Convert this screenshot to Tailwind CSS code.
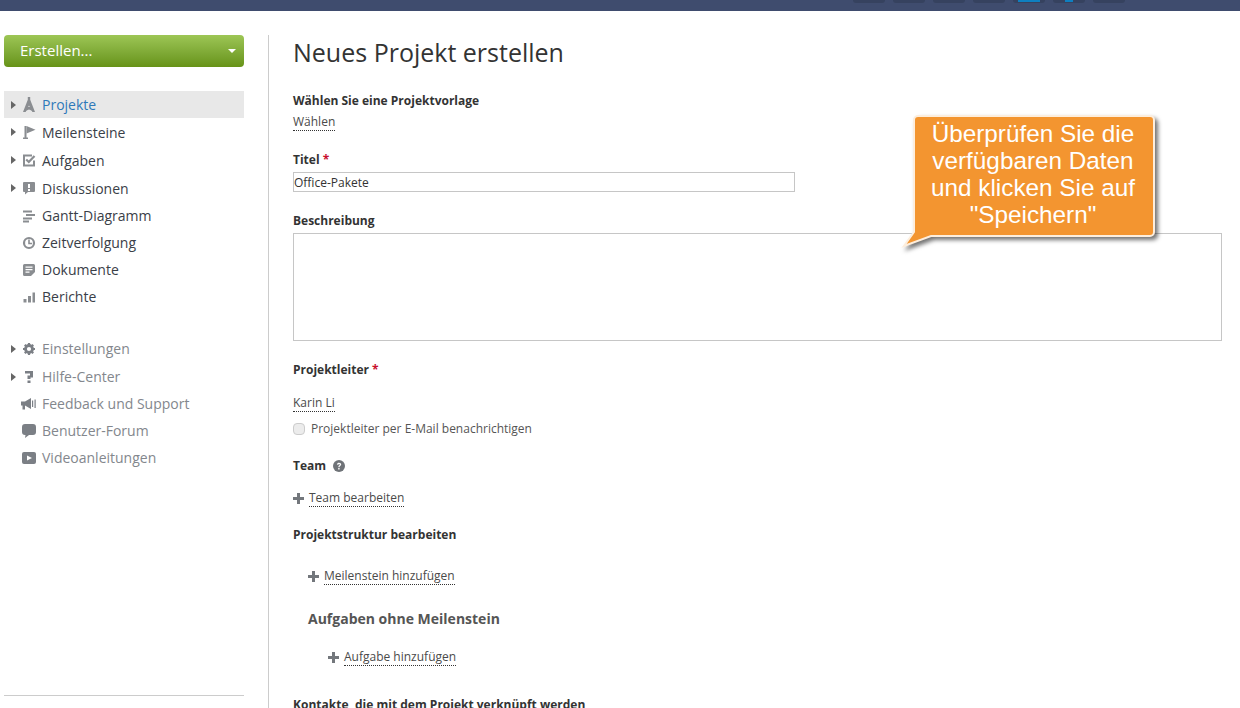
<!DOCTYPE html>
<html lang="de">
<head>
  <meta charset="UTF-8" />
  <title>Neues Projekt erstellen</title>
  <script src="https://cdn.jsdelivr.net/npm/@tailwindcss/browser@4"></script>
</head>
<body class="relative h-[708px] overflow-hidden bg-white font-['Open_Sans',sans-serif] text-[12px] text-[#333]">

<!-- top bar -->
<header class="h-[11px] bg-[#3f4c6e] flex justify-end items-start pr-[115px] gap-2">
  <div class="w-8 h-[3px] bg-[#36425f] rounded-b-sm"></div>
  <div class="w-8 h-[3px] bg-[#36425f] rounded-b-sm"></div>
  <div class="w-8 h-[3px] bg-[#36425f] rounded-b-sm"></div>
  <div class="w-8 h-[3px] bg-[#36425f] rounded-b-sm"></div>
  <div class="w-8 h-[3px] bg-[#36425f] rounded-b-sm flex justify-center"><div class="w-[22px] h-[2px] bg-[#0e7fc0]"></div></div>
  <div class="w-8 h-[3px] bg-[#36425f] rounded-b-sm flex justify-center"><div class="w-2 h-[2px] bg-[#0e7fc0]"></div></div>
  <div class="w-8 h-[3px] bg-[#36425f] rounded-b-sm"></div>
</header>

<div class="flex h-[697px] pt-6">
  <!-- sidebar -->
  <aside class="relative w-[268px] shrink-0 pl-1 pr-6 text-[14px] leading-[19px]">
    <div class="h-8 rounded-sm bg-linear-to-b from-[#9dc655] to-[#679316] flex items-center justify-between pl-4 pr-[8px] pb-[2px] text-[15px] text-white">
      <span>Erstellen...</span>
      <span class="w-0 h-0 mt-[2px] border-x-[4px] border-x-transparent border-t-[4px] border-t-white"></span>
    </div>

    <nav class="mt-6 text-[#3a4048]">
      <div class="flex items-center h-[27px] bg-[#e8e8e8] text-[#2f79b9]">
        <svg class="w-[5px] h-2 ml-[7px] mr-[6px]" viewBox="0 0 5 8"><path d="M0 0l5 4-5 4z" fill="#666"/></svg>
        <svg class="w-[14px] h-[15px] mr-[6px]" viewBox="0 0 14 15" fill="#8a8d91"><path d="M5.800 0h2.400v2.800L13 15h-2.600L7 8.500 3.600 15H1L5.800 2.800z"/><path d="M5 10h4l1.500 4L7 12.500 3.500 14z"/></svg>
        <span>Projekte</span>
      </div>
      <div class="flex items-center h-[28px]">
        <svg class="w-[5px] h-2 ml-[7px] mr-[6px]" viewBox="0 0 5 8"><path d="M0 0l5 4-5 4z" fill="#666"/></svg>
        <svg class="w-[14px] h-[14px] mr-[6px]" viewBox="0 0 14 14" fill="#8a8d91"><path d="M2.500 1h2v11.500H6V14H1v-1.500h1.500z"/><path d="M4.500 1L13.500 4.800 4.500 8.500z"/></svg>
        <span>Meilensteine</span>
      </div>
      <div class="flex items-center h-[28px]">
        <svg class="w-[5px] h-2 ml-[7px] mr-[6px]" viewBox="0 0 5 8"><path d="M0 0l5 4-5 4z" fill="#666"/></svg>
        <svg class="w-[14px] h-[14px] mr-[6px]" viewBox="0 0 14 14" fill="none" stroke="#8a8d91"><path stroke-width="2" d="M12 7.500V12.500H2V2.500H10"/><path stroke-width="2.200" d="M4.200 6.500L6.800 9 12.500 3"/></svg>
        <span>Aufgaben</span>
      </div>
      <div class="flex items-center h-[28px]">
        <svg class="w-[5px] h-2 ml-[7px] mr-[6px]" viewBox="0 0 5 8"><path d="M0 0l5 4-5 4z" fill="#666"/></svg>
        <svg class="w-[14px] h-[14px] mr-[6px]" viewBox="0 0 14 14"><path fill="#8a8d91" d="M2 1h10a1 1 0 011 1v8a1 1 0 01-1 1H6l-3 2.500V11H2a1 1 0 01-1-1V2a1 1 0 011-1z"/><path fill="#fff" d="M6 3h2v4H6zM6 8h2v2H6z"/></svg>
        <span>Diskussionen</span>
      </div>
      <div class="flex items-center h-[27px]">
        <svg class="w-[14px] h-[14px] ml-[18px] mr-[6px]" viewBox="0 0 14 14" fill="#8a8d91"><path d="M1 1.500h9v2H1zM4 5h9v2H4zM1 8.500h9v2H1zM1 11.500h6v2H1z"/></svg>
        <span>Gantt-Diagramm</span>
      </div>
      <div class="flex items-center h-[27px]">
        <svg class="w-[14px] h-[14px] ml-[18px] mr-[6px]" viewBox="0 0 14 14" fill="none" stroke="#8a8d91"><circle cx="7" cy="7" r="5" stroke-width="2.200"/><path stroke-width="1.600" d="M7 3.500V7.500H10"/></svg>
        <span>Zeitverfolgung</span>
      </div>
      <div class="flex items-center h-[27px]">
        <svg class="w-[14px] h-[14px] ml-[18px] mr-[6px]" viewBox="0 0 14 14"><path fill="#8a8d91" d="M2.500 1h9A1.500 1.500 0 0113 2.500V9l-4 4H2.500A1.500 1.500 0 011 11.500v-9A1.500 1.500 0 012.500 1z"/><path fill="#fff" d="M3.500 3.500h7v1.200h-7zM3.500 6h7v1.200h-7zM3.500 8.500h4v1.200h-4z"/></svg>
        <span>Dokumente</span>
      </div>
      <div class="flex items-center h-[27px]">
        <svg class="w-[14px] h-[14px] ml-[18px] mr-[6px]" viewBox="0 0 14 14" fill="#8a8d91"><path d="M1.500 9h3v3.500h-3zM6 6h3v6.500H6zM10.500 2.500h2.500v10h-2.500z"/></svg>
        <span>Berichte</span>
      </div>
    </nav>

    <nav class="mt-[25px] text-[#83878d]">
      <div class="flex items-center h-[27px]">
        <svg class="w-[5px] h-2 ml-[7px] mr-[6px]" viewBox="0 0 5 8"><path d="M0 0l5 4-5 4z" fill="#666"/></svg>
        <svg class="w-[14px] h-[14px] mr-[6px]" viewBox="0 0 14 14" fill="none" stroke="#7b7f85"><circle cx="7" cy="7" r="3.500" stroke-width="2.800"/><path stroke-width="2.200" d="M7 1v2M7 11v2M1 7h2M11 7h2M2.800 2.800l1.400 1.400M9.800 9.800l1.400 1.400M2.800 11.200l1.400-1.400M9.800 4.200l1.400-1.400"/></svg>
        <span>Einstellungen</span>
      </div>
      <div class="flex items-center h-[29px]">
        <svg class="w-[5px] h-2 ml-[7px] mr-[6px]" viewBox="0 0 5 8"><path d="M0 0l5 4-5 4z" fill="#666"/></svg>
        <svg class="w-[14px] h-[14px] mr-[6px]" viewBox="0 0 14 14" fill="#7b7f85"><path d="M3 1h8v6.500H8.500V9h-3V5.500H8V3.500H3zM5.500 10.500h3V13h-3z"/></svg>
        <span>Hilfe-Center</span>
      </div>
      <div class="flex items-center h-[25px]">
        <svg class="w-[16px] h-[14px] ml-[17px] mr-[5px]" viewBox="0 0 16 14" fill="#7b7f85"><path d="M0 4.500h4l6-3.500v11L4 8.500v4H1.500v-4H0z"/><path d="M11 3.500h1.200v6.500H11zM13.500 2.500h1.200v8.500h-1.200z"/></svg>
        <span>Feedback und Support</span>
      </div>
      <div class="flex items-center h-[27px] mt-px">
        <svg class="w-[14px] h-[14px] ml-[18px] mr-[6px]" viewBox="0 0 14 14" fill="#7b7f85"><path d="M3 0h8a3 3 0 013 3v5a3 3 0 01-3 3H7l-4 3 .5-3H3a3 3 0 01-3-3V3a3 3 0 013-3z"/></svg>
        <span>Benutzer-Forum</span>
      </div>
      <div class="flex items-center h-[27px]">
        <svg class="w-[14px] h-[14px] ml-[18px] mr-[6px]" viewBox="0 0 14 14"><rect y="1" width="14" height="12" rx="2" fill="#7b7f85"/><path d="M5 4.500L10 7l-5 2.500z" fill="#fff"/></svg>
        <span>Videoanleitungen</span>
      </div>
    </nav>

    <div class="absolute left-1 right-6 top-[660px] border-t border-[#ccc]"></div>
  </aside>

  <!-- main -->
  <main class="flex-1 h-[708px] border-l border-[#ccc] pl-6 pr-[18px] leading-4">
    <h1 class="h-9 -mt-px text-[25px] leading-9 text-[#333]">Neues Projekt erstellen</h1>

    <div class="mt-[22px] h-[18px] font-bold leading-[18px]">Wählen Sie eine Projektvorlage</div>
    <div class="mt-1 h-[17px] text-[#4a4a4a]"><span class="inline-block border-b border-dotted border-[#333]">Wählen</span></div>

    <div class="mt-[20px] h-[18px] font-bold leading-[18px]">Titel <span class="text-[#c8102e]">*</span></div>
    <input value="Office-Pakete" class="block mt-[3px] w-[502px] h-5 border border-[#c6c6c6] px-0 text-[12px] text-[#333] outline-none" />

    <div class="mt-[20px] h-[18px] font-bold leading-[18px]">Beschreibung</div>
    <div class="mt-[3px] h-[108px] border border-[#c6c6c6]"></div>

    <div class="mt-[20px] h-[18px] font-bold leading-[18px]">Projektleiter <span class="text-[#c8102e]">*</span></div>
    <div class="mt-[16px] h-[17px] text-[#4a4a4a]"><span class="inline-block border-b border-dotted border-[#333]">Karin Li</span></div>
    <label class="mt-[9px] flex items-center h-4 text-[#555]">
      <span class="w-3 h-3 mr-[6px] rounded-sm border border-[#ccc] bg-[#ececec]"></span>
      Projektleiter per E-Mail benachrichtigen
    </label>

    <div class="mt-[20px] h-[18px] flex items-center font-bold leading-[18px]">
      Team
      <svg class="w-3 h-3 ml-[7px]" viewBox="0 0 12 12"><circle cx="6" cy="6" r="6" fill="#6f7378"/><path d="M3.900 4.600C4 3.300 5 2.700 6.100 2.700 7.300 2.700 8.200 3.400 8.200 4.500 8.200 5.800 6.500 5.900 6.500 7.200H5.300C5.300 5.500 6.800 5.300 6.800 4.600 6.800 4.200 6.500 4 6.100 4 5.600 4 5.300 4.300 5.300 4.800zM5.200 8h1.400v1.400H5.200z" fill="#fff"/></svg>
    </div>
    <div class="mt-[15px] h-[17px] flex items-center text-[#4a4a4a]">
      <svg class="w-[11px] h-[11px] mr-[5px]" viewBox="0 0 11 11" fill="#73777c"><path d="M4 0h3v4h4v3H7v4H4V7H0V4h4z"/></svg>
      <span class="inline-block border-b border-dotted border-[#333]">Team bearbeiten</span>
    </div>

    <div class="mt-[19px] h-[18px] font-bold leading-[18px]">Projektstruktur bearbeiten</div>
    <div class="mt-[24px] ml-[15px] h-[17px] flex items-center text-[#4a4a4a]">
      <svg class="w-[11px] h-[11px] mr-[5px]" viewBox="0 0 11 11" fill="#73777c"><path d="M4 0h3v4h4v3H7v4H4V7H0V4h4z"/></svg>
      <span class="inline-block border-b border-dotted border-[#333]">Meilenstein hinzufügen</span>
    </div>
    <div class="mt-[24px] ml-[15px] h-5 text-[14px] font-bold leading-5 text-[#555]">Aufgaben ohne Meilenstein</div>
    <div class="mt-[20px] ml-[35px] h-[17px] flex items-center text-[#4a4a4a]">
      <svg class="w-[11px] h-[11px] mr-[5px]" viewBox="0 0 11 11" fill="#73777c"><path d="M4 0h3v4h4v3H7v4H4V7H0V4h4z"/></svg>
      <span class="inline-block border-b border-dotted border-[#333]">Aufgabe hinzufügen</span>
    </div>

    <div class="mt-[30px] h-[18px] font-bold leading-[18px]">Kontakte, die mit dem Projekt verknüpft werden</div>
  </main>
</div>

<!-- hint bubble -->
<div class="absolute left-[900px] top-[112px] w-[262px] h-[138px]">
  <svg class="absolute inset-0 drop-shadow-[3px_3px_2px_rgba(0,0,0,0.55)]" width="262" height="138" viewBox="0 0 262 138">
    <path d="M18 4H250a4 4 0 014 4V120a4 4 0 01-4 4H31L4 134 14 120V8a4 4 0 014-4z" fill="#f39530" stroke="#fdeedd" stroke-width="2"/>
  </svg>
  <div class="absolute left-[14px] top-[8px] w-[238px] text-center font-['Liberation_Sans',sans-serif] text-[24.3px] leading-[27px] text-white">Überprüfen Sie die<br>verfügbaren Daten<br>und klicken Sie auf<br>"Speichern"</div>
</div>

</body>
</html>
